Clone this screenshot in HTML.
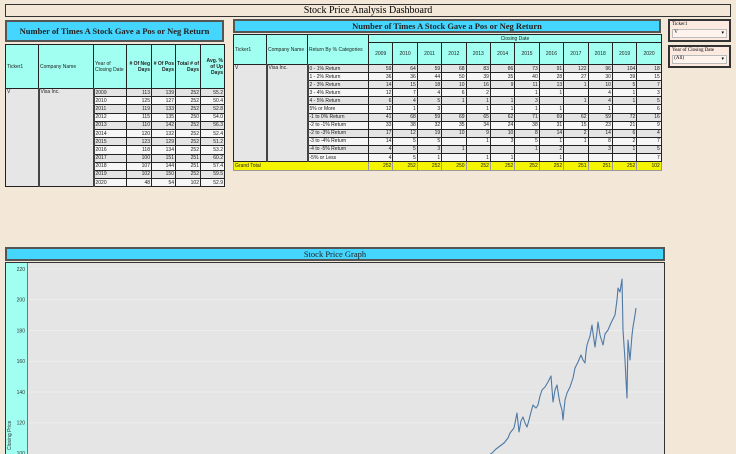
<!DOCTYPE html>
<html><head><meta charset="utf-8"><style>
body{margin:0;width:736px;height:454px;background:#f3e8d7;position:relative;overflow:hidden;font-family:"Liberation Sans",sans-serif;}
.a{position:absolute;box-sizing:border-box;}
.title{border:1px solid #333;font-family:"Liberation Serif",serif;text-align:center;}
.cy{background:#45d6ff;border:2px solid #555;font-family:"Liberation Serif",serif;font-weight:bold;color:#222;text-align:center;}
table{border-collapse:collapse;table-layout:fixed;position:absolute;font-size:5px;color:#222;}
td,th{border:1px solid #222;padding:0 1px;overflow:hidden;white-space:nowrap;font-weight:normal;}
th{background:#a0fff0;}
td.n{text-align:right;}
tr.g td.v{background:#e4e4e4;} tr.w td.v{background:#f6f6f6;}
td.sp{background:#e6e6e6;vertical-align:top;border-right:2px solid #444;}
tr.gt td{background:#f5f500;border-color:#999;}
.flt{border:2px solid #333;background:#fce9e0;font-family:"Liberation Serif",serif;font-size:5px;}
.sel{position:absolute;left:2px;right:2px;height:7px;background:#fff3ee;border:1px solid #bbb;font-size:5px;}
</style></head><body>
<div class="a title" style="left:5px;top:4px;width:726px;height:13px;font-size:10px;line-height:12px;">Stock Price Analysis Dashboard</div>

<div class="a cy" style="left:5px;top:20px;width:219px;height:22px;font-size:8.5px;line-height:19px;">Number of Times A Stock Gave a Pos or Neg Return</div>
<table style="left:5px;top:44px;width:219px;">
<colgroup><col style="width:33px"><col style="width:55px"><col style="width:33px"><col style="width:25px"><col style="width:24px"><col style="width:25px"><col style="width:24px"></colgroup>
<tr style="height:44px"><th style="text-align:left">Ticker1</th><th style="text-align:left">Company Name</th><th style="text-align:left;white-space:normal">Year of Closing Date</th><th style="text-align:right;white-space:normal;font-weight:bold"># Of Neg Days</th><th style="text-align:right;white-space:normal;font-weight:bold"># Of Pos Days</th><th style="text-align:right;white-space:normal;font-weight:bold">Total # of Days</th><th style="text-align:right;white-space:normal;font-weight:bold">Avg. % of Up Days</th></tr>
<tr class="g" style="height:8.2px"><td class="sp" rowspan="12">V</td><td class="sp" rowspan="12">Visa Inc.</td><td class="v">2009</td><td class="v n">113</td><td class="v n">139</td><td class="v n">252</td><td class="v n">55.2</td></tr>
<tr class="w" style="height:8.2px"><td class="v">2010</td><td class="v n">125</td><td class="v n">127</td><td class="v n">252</td><td class="v n">50.4</td></tr>
<tr class="g" style="height:8.2px"><td class="v">2011</td><td class="v n">119</td><td class="v n">133</td><td class="v n">252</td><td class="v n">52.8</td></tr>
<tr class="w" style="height:8.2px"><td class="v">2012</td><td class="v n">115</td><td class="v n">135</td><td class="v n">250</td><td class="v n">54.0</td></tr>
<tr class="g" style="height:8.2px"><td class="v">2013</td><td class="v n">110</td><td class="v n">142</td><td class="v n">252</td><td class="v n">56.3</td></tr>
<tr class="w" style="height:8.2px"><td class="v">2014</td><td class="v n">120</td><td class="v n">132</td><td class="v n">252</td><td class="v n">52.4</td></tr>
<tr class="g" style="height:8.2px"><td class="v">2015</td><td class="v n">123</td><td class="v n">129</td><td class="v n">252</td><td class="v n">51.2</td></tr>
<tr class="w" style="height:8.2px"><td class="v">2016</td><td class="v n">118</td><td class="v n">134</td><td class="v n">252</td><td class="v n">53.2</td></tr>
<tr class="g" style="height:8.2px"><td class="v">2017</td><td class="v n">100</td><td class="v n">151</td><td class="v n">251</td><td class="v n">60.2</td></tr>
<tr class="w" style="height:8.2px"><td class="v">2018</td><td class="v n">107</td><td class="v n">144</td><td class="v n">251</td><td class="v n">57.4</td></tr>
<tr class="g" style="height:8.2px"><td class="v">2019</td><td class="v n">102</td><td class="v n">150</td><td class="v n">252</td><td class="v n">59.5</td></tr>
<tr class="w" style="height:8.2px"><td class="v">2020</td><td class="v n">48</td><td class="v n">54</td><td class="v n">102</td><td class="v n">52.9</td></tr>
</table>

<div class="a cy" style="left:233px;top:19px;width:428px;height:14px;font-size:8.5px;line-height:11px;">Number of Times A Stock Gave a Pos or Neg Return</div>
<table style="left:233px;top:34px;width:428px;">
<colgroup><col style="width:33px"><col style="width:41px"><col style="width:61px"><col span="12" style="width:24.4px"></colgroup>
<tr style="height:8px"><th rowspan="2" style="text-align:left">Ticker1</th><th rowspan="2" style="text-align:left;white-space:normal">Company Name</th><th rowspan="2" style="text-align:left">Return By % Categories</th><th colspan="12" style="text-align:center">Closing Date</th></tr>
<tr style="height:22px"><th>2009</th><th>2010</th><th>2011</th><th>2012</th><th>2013</th><th>2014</th><th>2015</th><th>2016</th><th>2017</th><th>2018</th><th>2019</th><th>2020</th></tr>
<tr class="g" style="height:8.1px"><td class="sp" rowspan="12">V</td><td class="sp" rowspan="12">Visa Inc.</td><td class="v">0 - 1% Return</td><td class="v n">59</td><td class="v n">64</td><td class="v n">59</td><td class="v n">68</td><td class="v n">83</td><td class="v n">86</td><td class="v n">73</td><td class="v n">91</td><td class="v n">122</td><td class="v n">96</td><td class="v n">104</td><td class="v n">18</td></tr>
<tr class="w" style="height:8.1px"><td class="v">1 - 2% Return</td><td class="v n">36</td><td class="v n">36</td><td class="v n">44</td><td class="v n">50</td><td class="v n">39</td><td class="v n">35</td><td class="v n">40</td><td class="v n">28</td><td class="v n">27</td><td class="v n">30</td><td class="v n">39</td><td class="v n">15</td></tr>
<tr class="g" style="height:8.1px"><td class="v">2 - 3% Return</td><td class="v n">14</td><td class="v n">15</td><td class="v n">18</td><td class="v n">10</td><td class="v n">16</td><td class="v n">9</td><td class="v n">11</td><td class="v n">13</td><td class="v n">1</td><td class="v n">10</td><td class="v n">5</td><td class="v n">7</td></tr>
<tr class="w" style="height:8.1px"><td class="v">3 - 4% Return</td><td class="v n">12</td><td class="v n">7</td><td class="v n">4</td><td class="v n">6</td><td class="v n">2</td><td class="v n"></td><td class="v n">1</td><td class="v n">1</td><td class="v n"></td><td class="v n">4</td><td class="v n">1</td><td class="v n">3</td></tr>
<tr class="g" style="height:8.1px"><td class="v">4 - 5% Return</td><td class="v n">6</td><td class="v n">4</td><td class="v n">5</td><td class="v n">1</td><td class="v n">1</td><td class="v n">1</td><td class="v n">3</td><td class="v n"></td><td class="v n">1</td><td class="v n">4</td><td class="v n">1</td><td class="v n">5</td></tr>
<tr class="w" style="height:8.1px"><td class="v">5% or More</td><td class="v n">12</td><td class="v n">1</td><td class="v n">3</td><td class="v n"></td><td class="v n">1</td><td class="v n">1</td><td class="v n">1</td><td class="v n">1</td><td class="v n"></td><td class="v n">1</td><td class="v n"></td><td class="v n">6</td></tr>
<tr class="g" style="height:8.1px"><td class="v">-1 to 0% Return</td><td class="v n">41</td><td class="v n">68</td><td class="v n">59</td><td class="v n">69</td><td class="v n">65</td><td class="v n">62</td><td class="v n">71</td><td class="v n">69</td><td class="v n">62</td><td class="v n">59</td><td class="v n">72</td><td class="v n">16</td></tr>
<tr class="w" style="height:8.1px"><td class="v">-2 to -1% Return</td><td class="v n">33</td><td class="v n">38</td><td class="v n">32</td><td class="v n">35</td><td class="v n">34</td><td class="v n">24</td><td class="v n">38</td><td class="v n">31</td><td class="v n">15</td><td class="v n">23</td><td class="v n">21</td><td class="v n">9</td></tr>
<tr class="g" style="height:8.1px"><td class="v">-2 to -3% Return</td><td class="v n">17</td><td class="v n">12</td><td class="v n">19</td><td class="v n">10</td><td class="v n">9</td><td class="v n">10</td><td class="v n">8</td><td class="v n">14</td><td class="v n">2</td><td class="v n">14</td><td class="v n">6</td><td class="v n">4</td></tr>
<tr class="w" style="height:8.1px"><td class="v">-3 to -4% Return</td><td class="v n">14</td><td class="v n">5</td><td class="v n">5</td><td class="v n"></td><td class="v n">1</td><td class="v n">3</td><td class="v n">5</td><td class="v n">1</td><td class="v n">1</td><td class="v n">8</td><td class="v n">2</td><td class="v n">7</td></tr>
<tr class="g" style="height:8.1px"><td class="v">-4 to -5% Return</td><td class="v n">4</td><td class="v n">5</td><td class="v n">3</td><td class="v n">1</td><td class="v n"></td><td class="v n"></td><td class="v n">1</td><td class="v n">2</td><td class="v n"></td><td class="v n">3</td><td class="v n">1</td><td class="v n">5</td></tr>
<tr class="w" style="height:8.1px"><td class="v">-5% or Less</td><td class="v n">4</td><td class="v n">5</td><td class="v n">1</td><td class="v n"></td><td class="v n">1</td><td class="v n">1</td><td class="v n"></td><td class="v n">1</td><td class="v n"></td><td class="v n"></td><td class="v n"></td><td class="v n">7</td></tr>
<tr class="gt" style="height:8.5px"><td colspan="3">Grand Total</td><td class="n">252</td><td class="n">252</td><td class="n">252</td><td class="n">250</td><td class="n">252</td><td class="n">252</td><td class="n">252</td><td class="n">252</td><td class="n">251</td><td class="n">251</td><td class="n">252</td><td class="n">102</td></tr>
</table>

<div class="a flt" style="left:668px;top:19px;width:63px;height:23px;"><div style="padding:1px 2px">Ticker1</div><div class="sel" style="top:8px">&nbsp;V<span style="position:absolute;right:2px">▾</span></div></div>
<div class="a flt" style="left:668px;top:45px;width:63px;height:23px;"><div style="padding:1px 2px">Year of Closing Date</div><div class="sel" style="top:8px">&nbsp;(All)<span style="position:absolute;right:2px">▾</span></div></div>

<div class="a cy" style="left:5px;top:247px;width:660px;height:14px;font-size:8.5px;line-height:11px;font-weight:normal;">Stock Price Graph</div>
<div class="a" style="left:5px;top:262px;width:660px;height:192px;border:1px solid #333;border-bottom:none;background:#e5e5e5;"></div>
<div class="a" style="left:6px;top:263px;width:22px;height:191px;background:#a0fff0;border-right:1px solid #777;"></div>
<svg class="a" style="left:0;top:0" width="736" height="454">
<g stroke="#efefef" stroke-width="0.8">
<line x1="29" x2="664" y1="269" y2="269"/><line x1="29" x2="664" y1="299.7" y2="299.7"/><line x1="29" x2="664" y1="330.5" y2="330.5"/><line x1="29" x2="664" y1="361.3" y2="361.3"/><line x1="29" x2="664" y1="392" y2="392"/><line x1="29" x2="664" y1="422.8" y2="422.8"/>
</g>
<g font-family="Liberation Sans" font-size="5" fill="#333" text-anchor="end">
<text x="25" y="271">220</text><text x="25" y="301.5">200</text><text x="25" y="332.3">180</text><text x="25" y="363">160</text><text x="25" y="394">140</text><text x="25" y="424.6">120</text><text x="25" y="455">100</text>
<text transform="translate(11,450) rotate(-90)" text-anchor="start">Closing Price</text>
</g>
<polyline fill="none" stroke="#4e79a7" stroke-width="1.1" stroke-linejoin="round" points="485,458 492,453 496,449 500,446 504,443 508,438 510,433 514,428 517,413 519,432 521,421 523,417 525,423 527,427 529,420 531,412 533,405 536,408 538,405 540,396 542,390 545,387 548,382 551,376 553,402 555,390 557,385 559,398 560,403 562,410 563,420 565,400 567,393 570,387 573,378 575,368 578,362 581,355 583,360 585,363 586,352 587,345 590,336 592,325 593,333 595,347 597,332 598,322 600,335 603,345 605,334 608,330 611,323 615,315 617,300 618,288 620,292 622,279 623,330 624,345 625,360 626,380 627,398 628,340 629,350 630,360 632,335 633,327 635,315 636,308"/>
</svg>
</body></html>
